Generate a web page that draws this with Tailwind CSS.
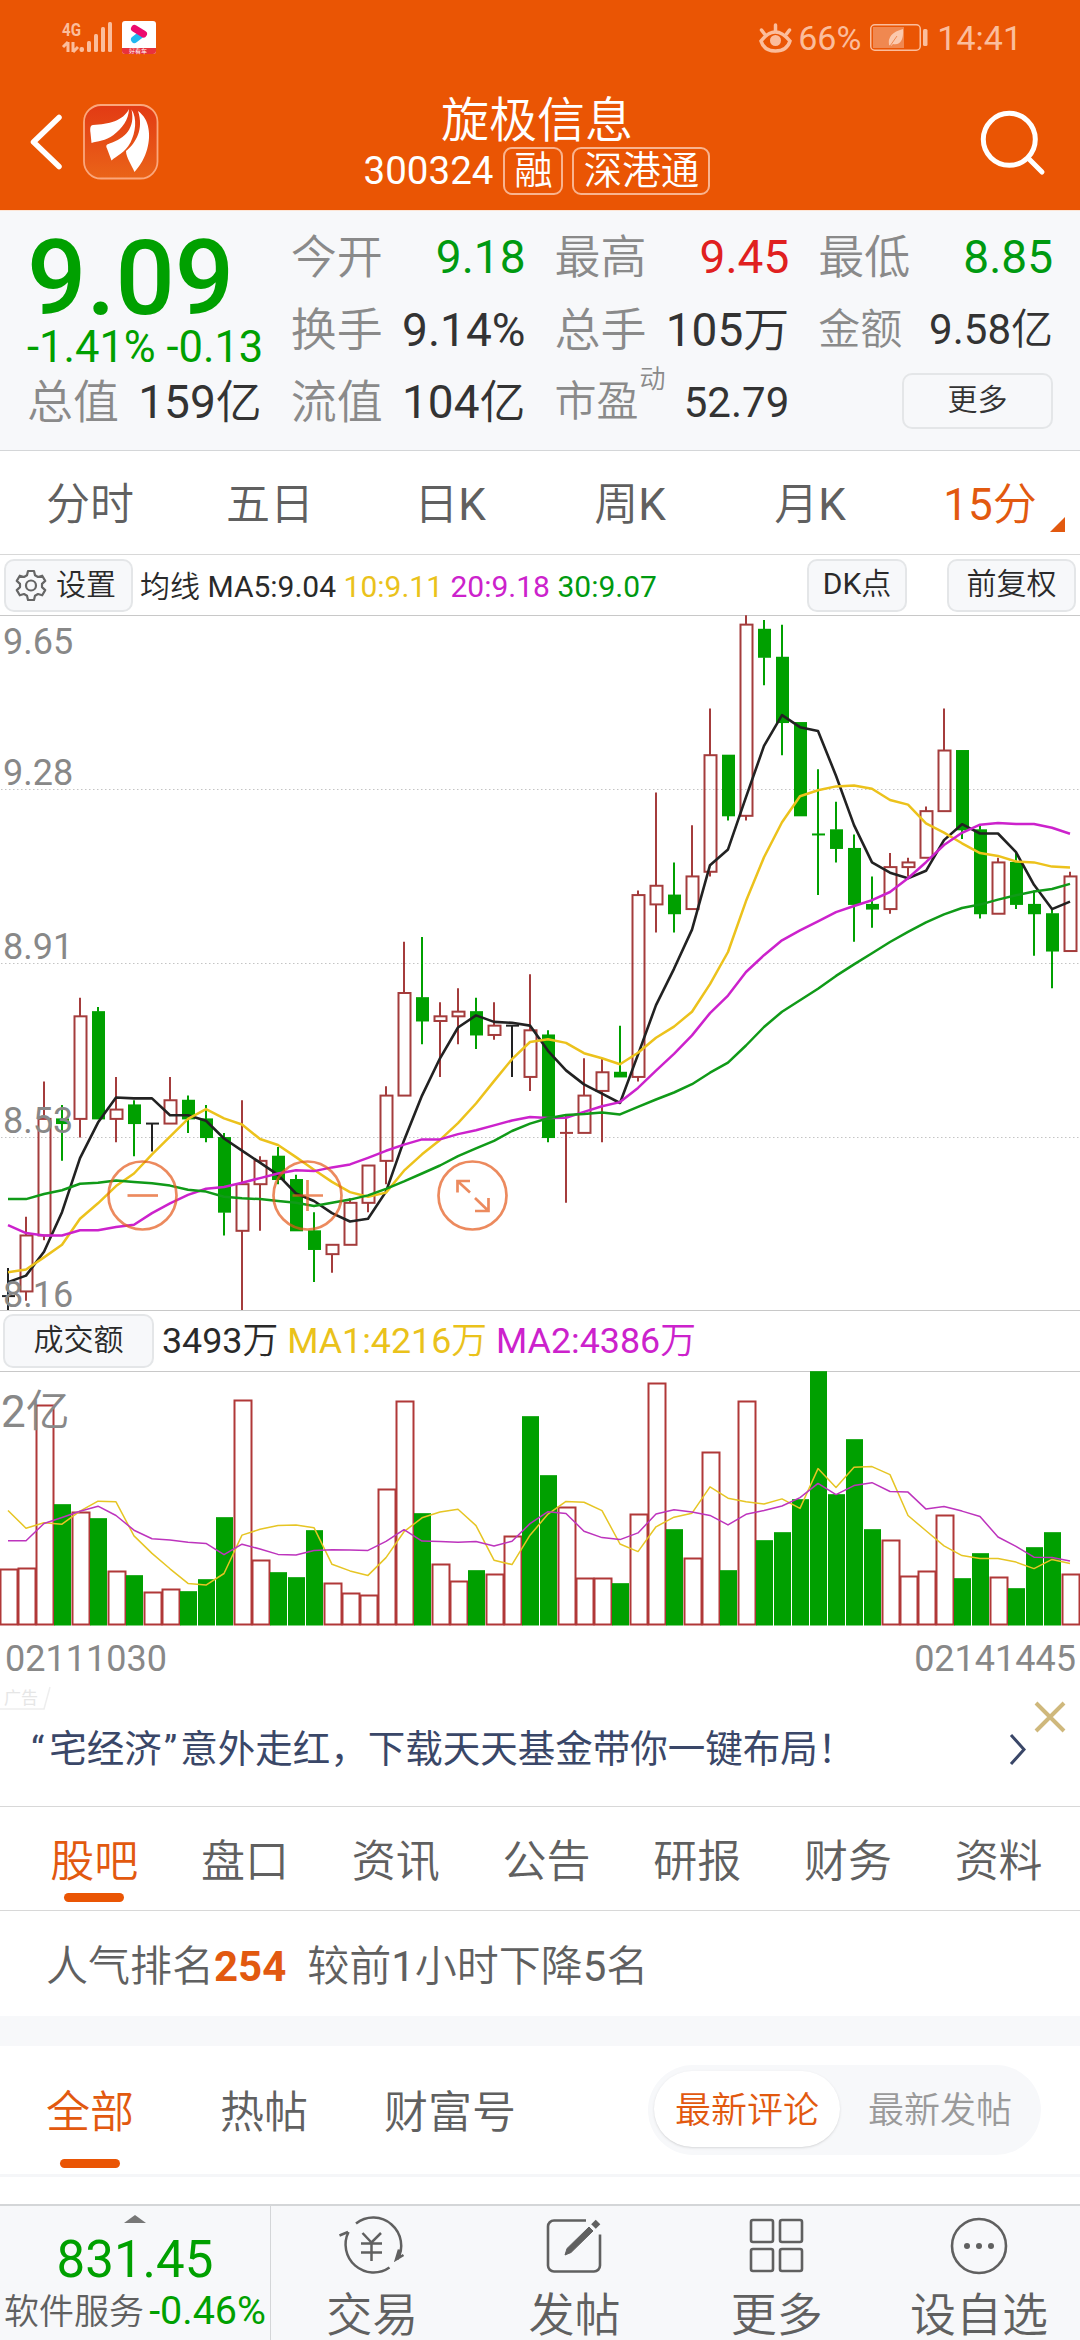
<!DOCTYPE html>
<html lang="zh-CN">
<head>
  <meta charset="UTF-8" />
  <title>旋极信息 300324</title>
  <meta name="viewport" content="width=device-width, initial-scale=1.0" />
  <script src="https://cdn.jsdelivr.net/npm/@tailwindcss/browser@4"></script>
</head>
<body class="w-[1080px] h-[2340px] overflow-hidden bg-white font-[Roboto,'Noto_Sans_CJK_SC_DemiLight','Noto_Sans_CJK_SC_Light','Noto_Sans_CJK_SC',sans-serif] leading-none text-[#333] whitespace-nowrap">

  <header class="h-[210px] bg-[#ea5504] text-white flex flex-col">
    <!-- status bar -->
    <div class="h-[76px] pl-[60px] pr-[58px] flex items-center justify-between text-[#fbbd9c]">
      <svg width="100" height="40" viewBox="60 18 100 40">
        <text x="62" y="36" font-size="19" font-weight="700" textLength="19" lengthAdjust="spacingAndGlyphs" fill="#fbbd9c">4G</text>
        <path d="M68 42v10M63 47l5-5M73 42v10M73 52l5-5" stroke="#fbbd9c" stroke-width="3" fill="none" />
        <g fill="#fbbd9c">
          <rect x="79.500" y="47" width="4.500" height="5" rx="2" />
          <rect x="87" y="41" width="4" height="11" rx="1.500" />
          <rect x="94" y="34" width="4" height="18" rx="1.500" />
          <rect x="101" y="27" width="4" height="25" rx="1.500" />
          <rect x="108" y="22" width="4" height="30" rx="1.500" />
        </g>
        <rect x="122" y="21" width="34" height="33" rx="3" fill="#fff" />
        <path d="M122 48h34v3a3 3 0 0 1-3 3h-28a3 3 0 0 1-3-3z" fill="#e8323c" />
        <path d="M134.500 39.500l6.500-5" stroke="#22b8f0" stroke-width="7" stroke-linecap="round" />
        <path d="M134.500 28.500l9 5.500" stroke="#ec0a6e" stroke-width="7" stroke-linecap="round" />
        <text x="129" y="53" font-size="6" fill="#fff">好看车</text>
      </svg>
      <div class="flex items-center text-[34px]">
        <svg width="36" height="34" viewBox="759 20 36 34" fill="none" stroke="#fbbd9c" stroke-width="3.500" stroke-linecap="round">
          <path d="M762 40q14-18 29 0q-3 10-14.500 10t-14.500-10z" />
          <path d="M776.500 24v6M762.500 29l3 4M790.500 29l-3 4" />
          <circle cx="776.500" cy="39.500" r="5.500" fill="#fbbd9c" stroke="none" />
        </svg>
        <span class="ml-1">66%</span>
        <svg class="ml-[8px] mr-[8px]" width="60" height="30" viewBox="870 23 60 30">
          <rect x="871.750" y="24.750" width="49.500" height="25.500" rx="4" fill="none" stroke="#fbbd9c" stroke-width="1.500" />
          <rect x="874" y="27" width="31" height="21" fill="#f08850" />
          <rect x="924" y="29" width="4.500" height="17" rx="1.500" fill="#fbbd9c" />
          <path d="M890 45q-2-12 14-16q1 17-10 15l-2 2z" fill="#fbc9ae" />
          <path d="M891 46l7-10" stroke="#f08850" />
        </svg>
        <span>14:41</span>
      </div>
    </div>
    <!-- title bar -->
    <div class="h-[134px] pl-[28px] pr-[34px] flex items-start justify-between">
      <div class="flex items-center pt-[28px] w-[260px]">
        <svg width="36" height="60" viewBox="28 112 36 60" fill="none" stroke="#fff" stroke-width="5.500" stroke-linecap="round" stroke-linejoin="round">
          <path d="M59 117.500L33.500 142L59 166.500" />
        </svg>
        <svg class="ml-[19px]" width="76" height="76" viewBox="83 105 76 76">
          <defs>
            <linearGradient id="logo" x1="0" y1="0" x2="0" y2="1">
              <stop offset="0" stop-color="#e23a14" />
              <stop offset="1" stop-color="#ea6418" />
            </linearGradient>
          </defs>
          <rect x="84" y="106" width="73.500" height="73.500" rx="17" fill="url(#logo)" stroke="#fba77c" stroke-width="1.800" />
          <g fill="#fff">
            <path d="M129 110c-6 12-20 15-36 16c-3 0-3 4-2.500 8l1 10c6-2 14-2 22-8c9-7 15-15 15.500-26z" />
            <path d="M131.500 110.500c4 18-6 29-22 34c-3 1-4 2-2.500 5l4.500 12c5-5 13-7 19-18c5-10 7-24 1-33z" />
            <path d="M138 112c6 18-2 32-12 40c0 6 6 15 8.500 21c13-14 16-32 14-43c-1-8-5-14-10.500-18z" />
          </g>
        </svg>
      </div>
      <div class="flex flex-col items-center pt-[21px]">
        <div class="text-[48px]">旋极信息</div>
        <div class="flex items-center mt-[2px] text-[38.500px]">
          <span>300324</span>
          <span class="ml-[10px] w-[60px] h-[48px] flex items-center justify-center border-2 border-[#f9b48f] rounded-[9px]">融</span>
          <span class="ml-[9px] w-[138px] h-[48px] flex items-center justify-center border-2 border-[#f9b48f] rounded-[9px]">深港通</span>
        </div>
      </div>
      <div class="flex justify-end pt-[34px] w-[260px]">
        <svg width="66" height="66" viewBox="980 110 66 66" fill="none" stroke="#fff" stroke-width="5" stroke-linecap="round">
          <circle cx="1009.300" cy="139.300" r="26" />
          <path d="M1028 158L1042 172" />
        </svg>
      </div>
    </div>
  </header>

  <!-- quote -->
  <section class="h-[241px] px-[27px] pt-[9px] bg-[#f7f8fa] border-t border-t-[#fde6d6] border-b border-b-[#d4d6d8] grid grid-cols-4 grid-rows-[73px_73px_72px] gap-x-[29px] text-[46px] text-[#8a8a8a]">
    <div class="row-span-2 text-[#00a000]">
      <div class="pt-[7px] text-[104.500px] font-medium">9.09</div>
      <div class="-mt-[6px] text-[43.500px]">-1.41% -0.13</div>
    </div>
    <div class="flex items-center justify-between"><span>今开</span><span class="text-[#009a10]">9.18</span></div>
    <div class="flex items-center justify-between"><span>最高</span><span class="text-[#e02020]">9.45</span></div>
    <div class="flex items-center justify-between"><span>最低</span><span class="text-[#009a10]">8.85</span></div>
    <div class="flex items-center justify-between"><span>换手</span><span class="text-[#333]">9.14%</span></div>
    <div class="flex items-center justify-between"><span>总手</span><span class="text-[#333]">105万</span></div>
    <div class="flex items-center justify-between text-[42px]"><span>金额</span><span class="text-[#333]">9.58亿</span></div>
    <div class="flex items-center justify-between"><span>总值</span><span class="text-[#333]">159亿</span></div>
    <div class="flex items-center justify-between"><span>流值</span><span class="text-[#333]">104亿</span></div>
    <div class="flex items-center text-[42px]"><span>市盈</span><span class="self-start ml-px text-[26px]">动</span><span class="ml-auto pt-[2px] text-[#333]">52.79</span></div>
    <div class="flex items-center justify-end text-[30px] text-[#333]">
      <button class="-mt-[2px] w-[151px] h-[56px] pb-[3px] border-2 border-[#e4e6e8] rounded-[10px]">更多</button>
    </div>
  </section>

  <!-- period tabs -->
  <nav class="h-[104px] border-b border-[#d8d8d8] grid grid-cols-6 text-[44px] text-[#606060]">
    <span class="pt-[32px] text-center">分时</span>
    <span class="pt-[32px] text-center">五日</span>
    <span class="pt-[32px] text-center">日K</span>
    <span class="pt-[32px] text-center">周K</span>
    <span class="pt-[32px] text-center">月K</span>
    <span class="pt-[32px] text-center text-[#e2590f] relative">15分
      <svg class="absolute right-[15px] top-[66px]" width="15" height="15"><path d="M15 0v15H0z" fill="#e2590f" /></svg>
    </span>
  </nav>

  <!-- MA toolbar -->
  <div class="h-[61px] pl-[4px] pr-[4px] border-b border-[#c8c8c8] flex items-center text-[30px] text-[#2a2a2a]">
    <button class="w-[129px] h-[53px] pl-[9px] flex items-center bg-[#f7f8fa] border-2 border-[#e4e6e8] rounded-[10px]">
      <svg width="32" height="32" viewBox="0 0 32 32" fill="none" stroke="#666" stroke-width="2.200" stroke-linejoin="round">
        <path d="M13 2h6l1 4.300l3 1.700l4.200-1.300l3 5.200l-3.200 3v3.200l3.200 3l-3 5.200l-4.200-1.300l-3 1.700l-1 4.300h-6l-1-4.300l-3-1.700l-4.200 1.300l-3-5.200l3.200-3v-3.200l-3.200-3l3-5.200l4.200 1.300l3-1.700z" />
        <circle cx="16" cy="16.500" r="5" />
      </svg>
      <span class="ml-[9px]">设置</span>
    </button>
    <span class="ml-[7px] pt-[3px] whitespace-pre">均线 MA5:9.04 <span class="text-[#eac21b]">10:9.11</span> <span class="text-[#cc22cc]">20:9.18</span> <span class="text-[#009a10]">30:9.07</span></span>
    <button class="ml-auto w-[100px] h-[53px] pb-[2px] bg-[#f7f8fa] border-2 border-[#e4e6e8] rounded-[10px]">DK点</button>
    <button class="ml-[40px] w-[129px] h-[53px] pb-[2px] bg-[#f7f8fa] border-2 border-[#e4e6e8] rounded-[10px]">前复权</button>
  </div>

  <svg id="price" class="block overflow-visible" width="1080" height="694" viewBox="0 616 1080 694"></svg>

  <!-- turnover toolbar -->
  <div class="h-[62px] pl-[3px] border-y border-[#c8c8c8] flex items-center text-[35.800px] text-[#2a2a2a]">
    <button class="w-[151px] h-[54px] pb-[2px] bg-[#f7f8fa] border-2 border-[#e4e6e8] rounded-[10px] text-[30px]">成交额</button>
    <span class="ml-[8px] pt-[2px] whitespace-pre">3493万 <span class="text-[#eac21b]">MA1:4216万</span> <span class="text-[#cc22cc]">MA2:4386万</span></span>
  </div>

  <svg id="volume" class="block overflow-visible" width="1080" height="256" viewBox="0 1372 1080 256"></svg>

  <div class="h-[58px] pl-[5px] pr-[4px] pt-[3px] flex items-center justify-between text-[36px] text-[#888]">
    <span>02111030</span><span>02141445</span>
  </div>

  <!-- banner -->
  <section class="h-[121px] border-b border-[#d8d8d8] relative flex items-center text-[37.500px] text-[#3a4768] font-[Roboto,'Noto_Sans_CJK_SC',sans-serif]">
    <svg class="absolute left-0 top-0" width="52" height="26"><path d="M0 23h44l6-22" fill="none" stroke="#eee" stroke-width="1.500" /><text x="4" y="18" font-size="17" fill="#e6e6e6">广告</text></svg>
    <span class="pl-[31px] pt-[7px]"><span class="mr-[5px]">“</span>宅经济<span class="ml-[2px] mr-[3px]">”</span>意外走红，下载天天基金带你一键布局！</span>
    <svg class="absolute left-[1007px] top-[46px]" width="22" height="36" fill="none" stroke="#3a4768" stroke-width="3"><path d="M4 3L17 17.500L4 32" /></svg>
    <svg class="absolute left-[1033px] top-[14px]" width="34" height="34" stroke="#cfb87c" stroke-width="4"><path d="M3 3L31 31M31 3L3 31" /></svg>
  </section>

  <nav class="h-[104px] pl-[19px] pr-[6px] border-b border-[#d8d8d8] grid grid-cols-7 text-[44px] text-[#606060]">
    <div class="pt-[33px] flex flex-col items-center text-[#e2590f]"><span>股吧</span><i class="mt-[9px] w-[60px] h-[9px] rounded-full bg-[#ea5504]"></i></div>
    <div class="pt-[33px] text-center">盘口</div>
    <div class="pt-[33px] text-center">资讯</div>
    <div class="pt-[33px] text-center">公告</div>
    <div class="pt-[33px] text-center">研报</div>
    <div class="pt-[33px] text-center">财务</div>
    <div class="pt-[33px] text-center">资料</div>
  </nav>

  <div class="h-[105px] pl-[46px] pt-[6px] flex items-center text-[42px] text-[#606060] whitespace-pre">人气排名<b class="font-bold text-[#e2590f]">254</b>  较前1小时下降5名</div>
  <div class="h-[30px] bg-[#f7f8fa]"></div>

  <!-- post filter -->
  <div class="h-[131px] border-b-3 border-[#f5f6f8] flex text-[44px] text-[#606060]">
    <div class="ml-[46px] pt-[45px] flex flex-col items-center text-[#e2590f]"><span>全部</span><i class="mt-[24px] w-[60px] h-[9px] rounded-full bg-[#ea5504]"></i></div>
    <div class="ml-[86px] pt-[45px]">热帖</div>
    <div class="ml-[76px] pt-[45px]">财富号</div>
    <div class="ml-auto mr-[39px] mt-[19px] w-[393px] h-[90px] rounded-full bg-[#f7f8fa] pl-[6px] pt-[6px] flex text-[36px]">
      <span class="w-[186px] h-[76px] rounded-full bg-white shadow-sm flex items-center justify-center pt-[4px] text-[#e2590f]">最新评论</span>
      <span class="h-[76px] ml-[28px] pt-[4px] flex items-center text-[#9a9a9a]">最新发帖</span>
    </div>
  </div>

  <!-- bottom bar -->
  <footer class="mt-[27px] h-[136px] bg-[#f7f8fa] border-t-2 border-[#d4d6d8] flex text-[46px] text-[#606060]">
    <div class="w-[271px] border-r border-[#d4d6d8] flex flex-col items-center">
      <svg class="mt-[9px]" width="22" height="8"><path d="M11 0L22 8H0z" fill="#777" /></svg>
      <span class="mt-[11px] text-[51px] text-[#00a000]">831.45</span>
      <div class="mt-[6px] w-full px-[4px] flex items-baseline justify-between text-[35px]"><span>软件服务</span><span class="text-[39.500px] text-[#00a000]">-0.46%</span></div>
    </div>
    <div class="flex-1 grid grid-cols-4">
      <div class="flex flex-col items-center">
        <svg class="mt-[8px]" width="68" height="64" viewBox="338 2213 68 64" fill="none" stroke="#606060" stroke-width="2.500">
          <path d="M356 2222.500A28 28 0 0 1 397.500 2258.500M339.500 2234.500l8.500-3.500M403.500 2254l-7.500 4.500l3-10" />
          <path d="M348.500 2231A28 28 0 0 0 389.500 2266.500" />
          <path d="M362.500 2232l9 9.500l9.500-9.500M361 2242.500h21M361 2251.500h21M371.500 2241v19" />
        </svg>
        <span class="mt-[14px]">交易</span>
      </div>
      <div class="flex flex-col items-center">
        <svg class="mt-[8px]" width="64" height="64" viewBox="542 2213 64 64" fill="none" stroke="#606060" stroke-width="2.600">
          <path d="M586 2219.500h-32a6 6 0 0 0-6 6v39a6 6 0 0 0 6 6h40a6 6 0 0 0 6-6v-31" />
          <path d="M565 2254l2-6.500l22-21.500l4 4l-22 21.500z" fill="#606060" stroke-width="1" />
          <path d="M593.500 2225.500l4.500-4.500" stroke-width="6.500" />
        </svg>
        <span class="mt-[14px]">发帖</span>
      </div>
      <div class="flex flex-col items-center">
        <svg class="mt-[8px]" width="64" height="64" viewBox="0 0 64 64" fill="none" stroke="#606060" stroke-width="2.600">
          <rect x="6" y="6" width="22" height="22" rx="2" />
          <rect x="35" y="6" width="22" height="22" rx="2" />
          <rect x="6" y="35" width="22" height="22" rx="2" />
          <rect x="35" y="35" width="22" height="22" rx="2" />
        </svg>
        <span class="mt-[14px]">更多</span>
      </div>
      <div class="flex flex-col items-center">
        <svg class="mt-[8px]" width="64" height="64" viewBox="0 0 64 64" fill="#606060">
          <circle cx="32" cy="32" r="27" fill="none" stroke="#606060" stroke-width="2.600" />
          <circle cx="20" cy="32" r="3" /><circle cx="32" cy="32" r="3" /><circle cx="44" cy="32" r="3" />
        </svg>
        <span class="mt-[14px]">设自选</span>
      </div>
    </div>
  </footer>

  <script>
    // open, high, low, close in cents
    const bars = [
      [819,825,816,819],[820,836,818,832],[832,865,831,857],[857,860,848,856],[857,883,853,879],
      [880,881,857,857],[857,866,852,859],[860,861,849,856],[856,856,850,856],[856,866,856,861],
      [861,862,854,857],[857,860,852,853],[853,854,832,837],[833,861,816,843],[843,849,833,848],
      [849,851,843,844],[844,845,833,833],[833,837,822,829],[828,830,824,830],[830,840,830,839],
      [839,847,837,847],[848,864,843,862],[862,895,862,884],[883,896,873,878],[878,882,866,879],
      [879,885,873,880],[880,883,872,875],[875,882,874,877],[877,877,866,877],[866,888,863,876],
      [875,876,852,853],[854,858,839,854],[854,870,854,862],[863,870,852,867],[867,877,866,866],
      [866,906,865,905],[903,927,897,907],[905,912,897,901],[902,920,902,909],[910,945,909,935],
      [935,935,921,922],[922,965,921,963],[962,964,950,956],[956,963,935,942],[942,942,922,922],
      [918,932,905,918],[919,925,912,915],[915,918,895,903],[903,909,898,902],[902,914,901,911],
      [911,913,909,912],[913,924,913,923],[923,945,923,936],[936,936,917,919],[919,920,900,901],
      [901,913,901,912],[912,914,902,903],[903,906,892,901],[901,902,885,893],[893,910,893,909]
    ];
    const volumes = [
      171,174,663,364,342,322,165,151,102,111,103,139,325,678,198,160,145,286,129,99,
      93,411,675,337,186,135,166,156,270,628,451,357,144,144,127,336,729,289,204,522,
      166,675,256,280,379,763,394,559,289,258,150,165,333,142,217,147,112,235,280,156
    ];
    // averages for the bars that come before a full window
    const seed = {
      5: [822,823.4,828.5,837],
      10: [824.1,824.7,827.3,830,835.6,838.9,842.6,845.3,849.4],
      20: [834.2,832.5,832,832,833.1,833.1,833.8,834.3,836.8,838.9,840.7,842,842.4,843.3,844.3,845.3,846,845.8,846.6],
      30: [839.8,839.8,840.9,841.7,843.1,843.3,843.8,843.5,843.2,842.7,841.8,841.4,840.3,840,839.8,839.4,839,838.3,839,839.7,840.6,842,843.6,845.3,847,849,850.7,852.3,854.4]
    };
    const RED = "#a43c3c", GREEN = "#00a000", BLACK = "#222";
    const cx = i => 8 + 18 * i;
    const py = c => 615.300 + (965 - c) * 4.663;
    const vy = v => 1625.500 - v / 3;

    function average(values, n, start) {
      return values.map((_, i) => i < n - 1 ? start[i]
        : values.slice(i - n + 1, i + 1).reduce((a, b) => a + b, 0) / n);
    }
    function line(values, y, color, width) {
      const pts = values.map((v, i) => `${cx(i)},${y(v).toFixed(1)}`).join(" ");
      return `<polyline points="${pts}" fill="none" stroke="${color}" stroke-width="${width}" stroke-linejoin="round"/>`;
    }

    let price = "";
    [789.5, 963.5, 1137.5].forEach(y => {
      price += `<path d="M1 ${y}H1080" stroke="#c4c4c4" stroke-dasharray="1.5 2.5"/>`;
    });
    const flat = { 31: RED, 45: GREEN };
    bars.forEach(([o, h, l, c], i) => {
      const x = cx(i);
      const color = o === c ? flat[i] || BLACK : c > o ? RED : GREEN;
      const top = py(Math.max(o, c)), bottom = py(Math.min(o, c));
      price += `<path d="M${x} ${py(h)}V${top}M${x} ${bottom}V${Math.min(py(l), 1310)}" stroke="${color}" stroke-width="2"/>`;
      if (o === c) price += `<path d="M${x - 6} ${top}h13" stroke="${color}" stroke-width="2"/>`;
      else if (c > o) price += `<rect x="${x - 5.5}" y="${top}" width="12" height="${bottom - top}" fill="none" stroke="${color}" stroke-width="2"/>`;
      else price += `<rect x="${x - 6}" y="${top - .5}" width="13" height="${bottom - top + 1}" fill="${color}"/>`;
    });
    const closes = bars.map(b => b[3]);
    price += line(average(closes, 5, seed[5]), py, "#222", 2.6);
    price += line(average(closes, 10, seed[10]), py, "#ecc21c", 2.5);
    price += line(average(closes, 20, seed[20]), py, "#cc22cc", 2.5);
    price += line(average(closes, 30, seed[30]), py, "#109a18", 2.5);
    [["9.65", 654], ["9.28", 785], ["8.91", 959], ["8.53", 1133], ["8.16", 1307]].forEach(([t, y]) => {
      price += `<text x="3" y="${y}" font-size="36" fill="#888">${t}</text>`;
    });
    // zoom out, zoom in, full screen
    price += `<g fill="none" stroke="#e4591a" stroke-opacity=".7" stroke-width="2.700">
      <circle cx="142.500" cy="1195.500" r="34"/><path d="M127.500 1195.500h30.500"/>
      <circle cx="307.500" cy="1195.500" r="34"/><path d="M292.500 1195.500h30.500M307.500 1180v31"/>
      <circle cx="472.500" cy="1195.500" r="34"/>
      <path d="M470 1181h-12.500v11.500M457.500 1181l12.500 11.500M475 1211h13.500v-13M488.500 1211l-13.500-13"/></g>`;
    document.getElementById("price").innerHTML = price;

    // these two are drawn as falling bars
    const soldOff = [29, 45];
    let volume = "";
    volumes.forEach((v, i) => {
      const [o, , , c] = bars[i];
      if (c < o || soldOff.includes(i)) volume += `<rect x="${18 * i}" y="${vy(v)}" width="17" height="${v / 3}" fill="${GREEN}"/>`;
      else volume += `<rect x="${18 * i + .5}" y="${vy(v) + 1}" width="17" height="${v / 3 - 2}" fill="none" stroke="#b03838" stroke-width="2"/>`;
    });
    volume += line(average(volumes, 5, [345,292,308,304]), vy, "#e6c524", 1.5);
    volume += line(average(volumes, 10, [254,254,306,324,343,358,330,286,260]), vy, "#bd34bd", 1.5);
    volume += `<text x="1" y="1427" font-size="44" fill="#888">2亿</text>`;
    document.getElementById("volume").innerHTML = volume;
  </script>
</body>
</html>
